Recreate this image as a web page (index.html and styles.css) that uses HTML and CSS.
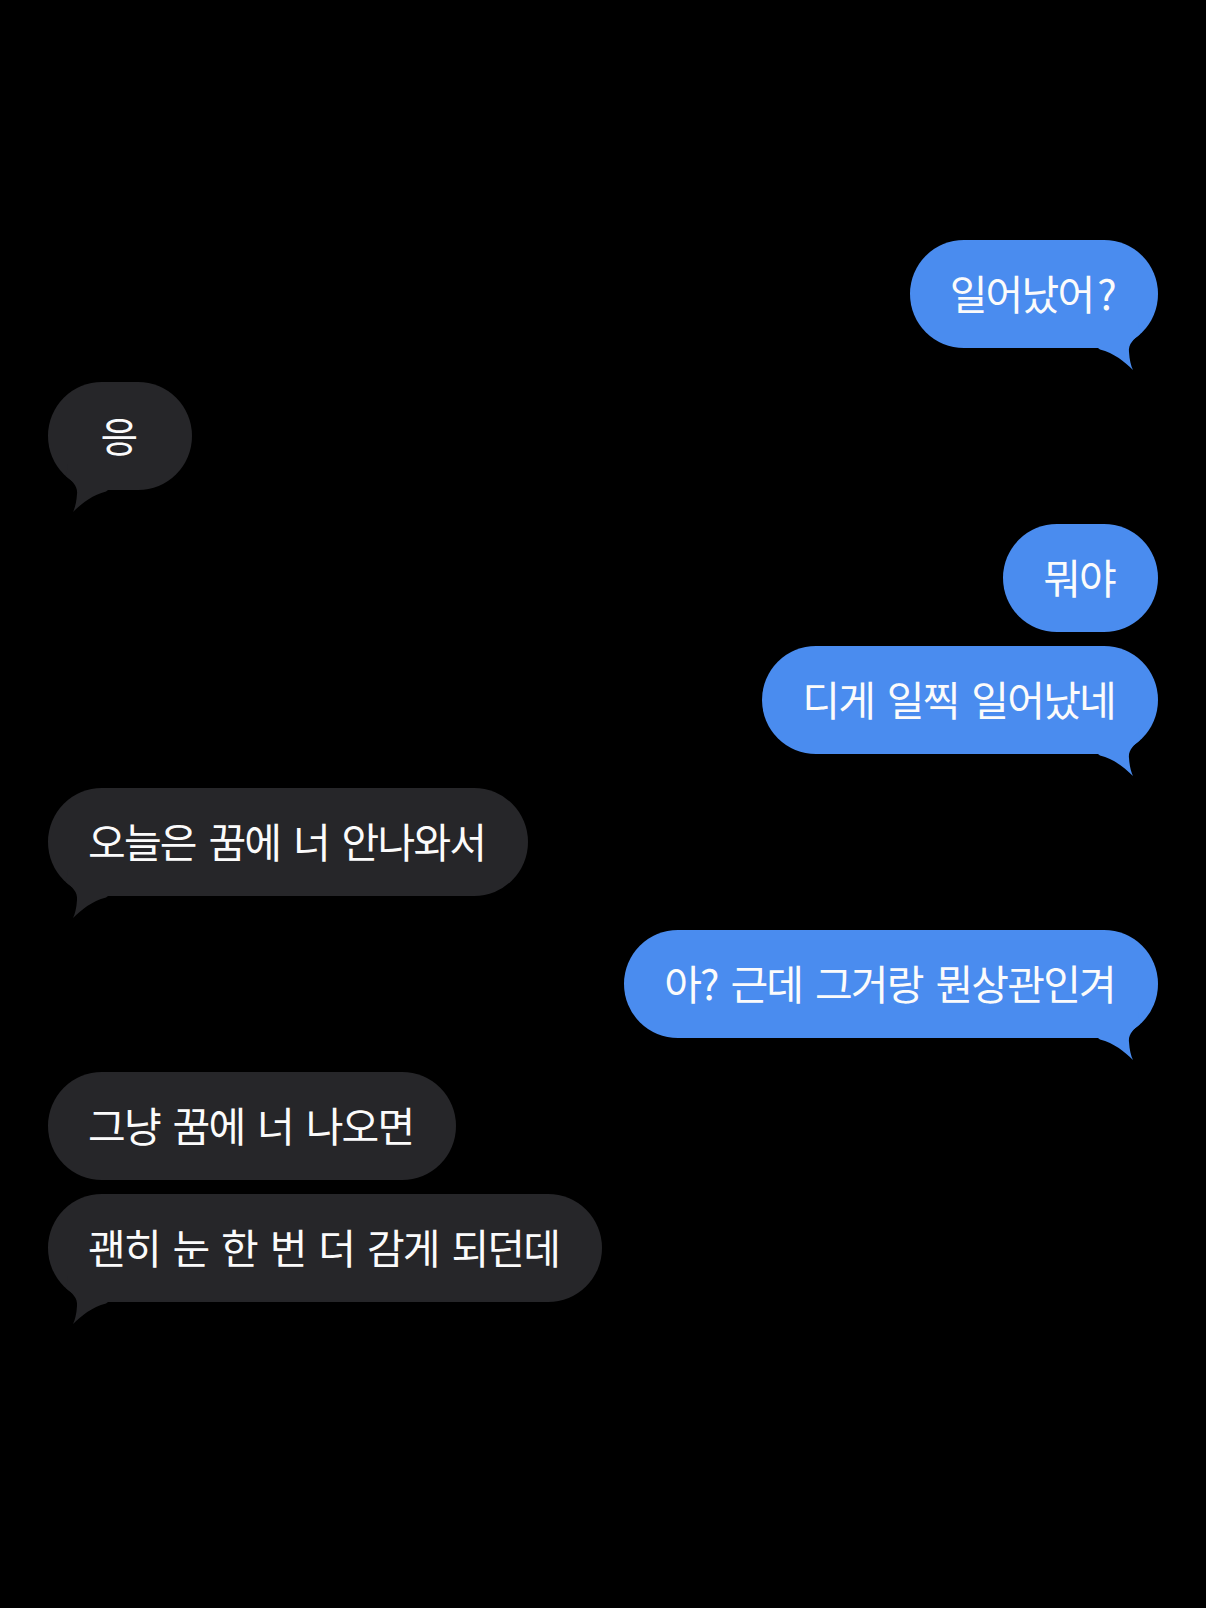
FILE: index.html
```html
<!DOCTYPE html>
<html lang="ko">
<head>
<meta charset="utf-8">
<title>Messages</title>
<link rel="stylesheet" href="styles.css">
</head>
<body>
<main class="chat">
  <div class="group sent">
    <div class="bubble">일어났어<span class="q">?</span><svg class="tail" viewBox="0 0 60 50" width="60" height="50"><path d="M0 0 L40 0 L42 12 C36 17 30 22 31 30 C31.5 38 33 44 35 48 C27 40 16 31 2 27.5 L0 26 Z"/></svg></div>
  </div>
  <div class="group recv">
    <div class="bubble short">응<svg class="tail" viewBox="0 0 60 50" width="60" height="50"><path d="M0 0 L40 0 L42 12 C36 17 30 22 31 30 C31.5 38 33 44 35 48 C27 40 16 31 2 27.5 L0 26 Z"/></svg></div>
  </div>
  <div class="group sent">
    <div class="bubble">뭐야</div>
    <div class="bubble">디게 일찍 일어났네<svg class="tail" viewBox="0 0 60 50" width="60" height="50"><path d="M0 0 L40 0 L42 12 C36 17 30 22 31 30 C31.5 38 33 44 35 48 C27 40 16 31 2 27.5 L0 26 Z"/></svg></div>
  </div>
  <div class="group recv">
    <div class="bubble">오늘은 꿈에 너 안나와서<svg class="tail" viewBox="0 0 60 50" width="60" height="50"><path d="M0 0 L40 0 L42 12 C36 17 30 22 31 30 C31.5 38 33 44 35 48 C27 40 16 31 2 27.5 L0 26 Z"/></svg></div>
  </div>
  <div class="group sent">
    <div class="bubble">아? 근데 그거랑 뭔상관인겨<svg class="tail" viewBox="0 0 60 50" width="60" height="50"><path d="M0 0 L40 0 L42 12 C36 17 30 22 31 30 C31.5 38 33 44 35 48 C27 40 16 31 2 27.5 L0 26 Z"/></svg></div>
  </div>
  <div class="group recv">
    <div class="bubble">그냥 꿈에 너 나오면</div>
    <div class="bubble">괜히 눈 한 번 더 감게 되던데<svg class="tail" viewBox="0 0 60 50" width="60" height="50"><path d="M0 0 L40 0 L42 12 C36 17 30 22 31 30 C31.5 38 33 44 35 48 C27 40 16 31 2 27.5 L0 26 Z"/></svg></div>
  </div>
</main>
</body>
</html>
```

FILE: styles.css
```css
html, body {
  margin: 0;
  padding: 0;
  background: #000;
}

body {
  width: 1206px;
  height: 1608px;
  overflow: hidden;
  font-family: "Noto Sans CJK KR", "Noto Sans", sans-serif;
}

.chat {
  display: flex;
  flex-direction: column;
  gap: 34px;
  padding: 240px 48px 0;
}

.group {
  display: flex;
  flex-direction: column;
  gap: 14px;
}

.group.sent {
  align-items: flex-end;
}

.group.recv {
  align-items: flex-start;
}

.bubble {
  position: relative;
  box-sizing: border-box;
  height: 108px;
  padding: 0 43px 4px 40px;
  border-radius: 54px;
  font-size: 41px;
  line-height: 104px;
  letter-spacing: -1.8px;
  word-spacing: 3px;
  color: #fbfbfb;
  white-space: nowrap;
}

.bubble .q {
  margin-left: 4px;
}

.bubble.short {
  min-width: 144px;
  text-align: center;
}

.sent .bubble {
  background: #4a8cef;
}

.recv .bubble {
  background: #262629;
}

.tail {
  position: absolute;
  bottom: -24px;
  display: block;
}

.sent .tail {
  right: 0;
  fill: #4a8cef;
}

.recv .tail {
  left: 0;
  fill: #262629;
  transform: scaleX(-1);
}
```
